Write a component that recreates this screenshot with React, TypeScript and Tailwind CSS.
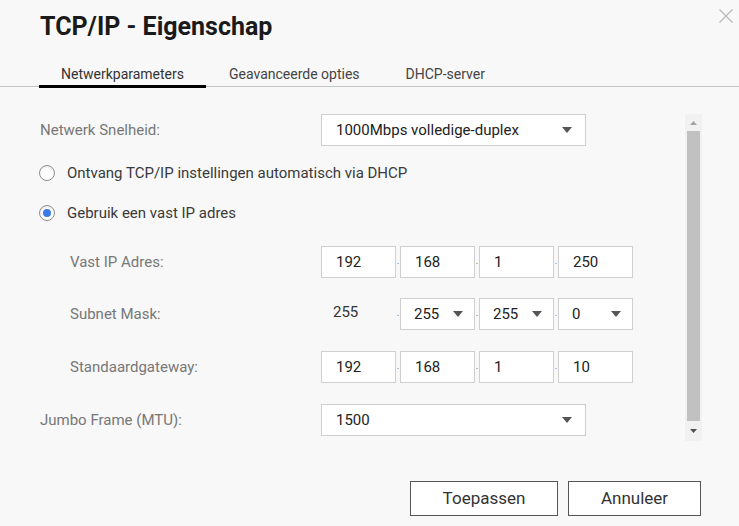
const FONT = { fontFamily: 'Roboto, "Liberation Sans", sans-serif' };

function Arrow() {
  return (
    <svg width="10" height="6" viewBox="0 0 10 6">
      <path d="M0 0 L10 0 L5 6 Z" fill="#555" />
    </svg>
  );
}

function Select({ value, wide }: { value: string; wide?: boolean }) {
  return (
    <div
      className={
        wide
          ? 'w-[265px] h-[32px] border border-[#cfcfcf] bg-white flex items-center justify-between pl-[14px] pr-[13px] text-[15px] text-[#222]'
          : 'w-[75px] h-[32px] border border-[#cfcfcf] bg-white flex items-center justify-between pl-[13px] pr-[11px] text-[15px] text-[#222]'
      }
    >
      <span>{value}</span>
      <Arrow />
    </div>
  );
}

function Octet({ value }: { value: string }) {
  return (
    <div className="w-[75px] h-[32px] border border-[#cfcfcf] bg-white flex items-center pl-[14px] text-[15px] text-[#222]">
      {value}
    </div>
  );
}

function Dot() {
  return (
    <div className="w-[4px] h-[32px] flex justify-center items-end pb-[12px] text-[10px] leading-none text-[#888]">.</div>
  );
}

function Radio({ checked, label }: { checked?: boolean; label: string }) {
  return (
    <div className="h-[20px] flex items-center -ml-[1px]">
      <div className="w-[16px] h-[16px] rounded-full border border-[#8f8f8f] bg-white flex items-center justify-center shadow-[inset_0_1px_2px_rgba(0,0,0,0.12)]">
        {checked && <div className="w-[8px] h-[8px] rounded-full bg-[#3b7be6]" />}
      </div>
      <span className="ml-[12px] text-[15px] text-[#3a3a3a]">{label}</span>
    </div>
  );
}

function IpRow({ label, values }: { label: string; values: string[] }) {
  return (
    <div className="flex items-center h-[32px]">
      <div className="w-[281px] pl-[30px] text-[15px] text-[#777]">{label}</div>
      {values.map((v, i) => (
        <div key={i} className="flex items-center">
          {i > 0 && <Dot />}
          <Octet value={v} />
        </div>
      ))}
    </div>
  );
}

export default function App() {
  return (
    <div className="w-[739px] h-[526px] bg-[#f8f8f8] relative overflow-hidden" style={FONT}>
      <svg width="14" height="14" viewBox="0 0 14 14" className="absolute top-[9px] right-[6px]">
        <path d="M0.5 0.5 L13.5 13.5 M13.5 0.5 L0.5 13.5" stroke="#b8b8b8" strokeWidth="1.2" />
      </svg>

      <h1 className="pt-[13px] pl-[40px] text-[25px] leading-[28px] font-bold text-[#1a1a1a]">TCP/IP - Eigenschap</h1>

      <div className="mt-[19px] h-[27px] border-b border-[#c6c6c6] flex pl-[39px] text-[14px] text-[#333]">
        <div className="h-[28px] pt-[6px] leading-[16px] px-[22px] border-b-[3px] border-black">Netwerkparameters</div>
        <div className="h-[28px] pt-[6px] leading-[16px] px-[23px] text-[#444]">Geavanceerde opties</div>
        <div className="h-[28px] pt-[6px] leading-[16px] px-[23px] text-[#444]">DHCP-server</div>
      </div>

      <div className="mt-[27px] flex pl-[40px]">
        <div className="w-[645px] flex flex-col">
          <div className="flex items-center h-[32px]">
            <div className="w-[281px] text-[15px] text-[#777]">Netwerk Snelheid:</div>
            <Select value="1000Mbps volledige-duplex" wide />
          </div>

          <div className="mt-[17px]">
            <Radio label="Ontvang TCP/IP instellingen automatisch via DHCP" />
          </div>
          <div className="mt-[20px]">
            <Radio checked label="Gebruik een vast IP adres" />
          </div>

          <div className="mt-[23px]">
            <IpRow label="Vast IP Adres:" values={['192', '168', '1', '250']} />
          </div>

          <div className="mt-[20px] flex items-center h-[32px]">
            <div className="w-[281px] pl-[30px] text-[15px] text-[#777]">Subnet Mask:</div>
            <div className="w-[75px] pl-[12px] pb-[3px] text-[15px] text-[#333]">255</div>
            <Dot />
            <Select value="255" />
            <Dot />
            <Select value="255" />
            <Dot />
            <Select value="0" />
          </div>

          <div className="mt-[21px]">
            <IpRow label="Standaardgateway:" values={['192', '168', '1', '10']} />
          </div>

          <div className="mt-[21px] flex items-center h-[32px]">
            <div className="w-[281px] text-[15px] text-[#777]">Jumbo Frame (MTU):</div>
            <Select value="1500" wide />
          </div>
        </div>

        <div className="w-[17px] h-[327px] bg-[#f1f1f1] flex flex-col items-center">
          <div className="h-[17px] flex items-center justify-center">
            <svg width="7" height="4" viewBox="0 0 7 4">
              <path d="M0 4 L7 4 L3.5 0 Z" fill="#a3a3a3" />
            </svg>
          </div>
          <div className="w-[13px] h-[290px] bg-[#c1c1c1]" />
          <div className="h-[20px] flex items-center justify-center">
            <svg width="7" height="4" viewBox="0 0 7 4">
              <path d="M0 0 L7 0 L3.5 4 Z" fill="#505050" />
            </svg>
          </div>
        </div>
      </div>

      <div className="mt-[40px] flex justify-end gap-[10px] pr-[38px]">
        <button className="w-[148px] h-[35px] border border-[#555] bg-white text-[17px] text-[#333]">Toepassen</button>
        <button className="w-[133px] h-[35px] border border-[#555] bg-white text-[17px] text-[#333]">Annuleer</button>
      </div>
    </div>
  );
}
